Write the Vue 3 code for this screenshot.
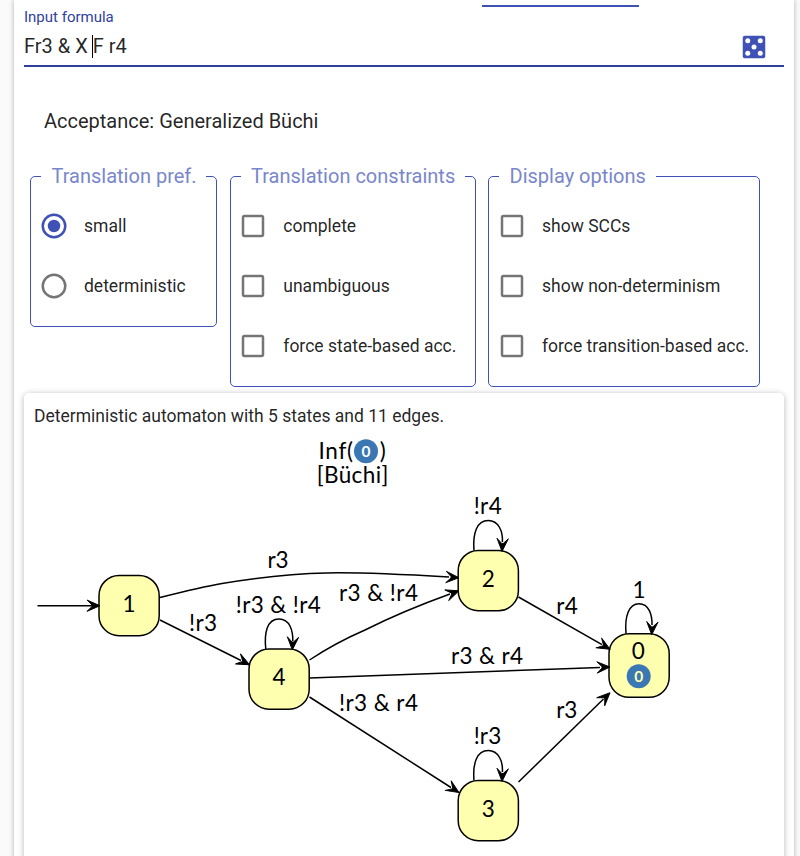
<script setup>
const groups = [
  { title: 'Translation pref.', cls: 'pref', kind: 'radio', items: ['small', 'deterministic'] },
  { title: 'Translation constraints', cls: 'constraints', kind: 'check', items: ['complete', 'unambiguous', 'force state-based acc.'] },
  { title: 'Display options', cls: 'display', kind: 'check', items: ['show SCCs', 'show non-determinism', 'force transition-based acc.'] }
]

const nodes = [
  { id: '1', x: 99, y: 575.5, h: 60.2, tx: 129, ty: 612 },
  { id: '4', x: 249, y: 649, h: 60.2, tx: 279, ty: 684.7 },
  { id: '2', x: 458.2, y: 550.5, h: 60.2, tx: 488.3, ty: 586.7 },
  { id: '3', x: 458.2, y: 780.5, h: 60.2, tx: 488.3, ty: 816.7 },
  { id: '0', x: 609, y: 633.7, h: 63.6, tx: 638.2, ty: 658.7 }
]

const edges = [
  'M37.5 605.7H92',
  'M160 597.5C180 592.5 202 587 222 583.5C303 570 345 571 449 577',
  'M160 620L241 660.5',
  'M309.5 660C320 653 342 640 365 630C393 616 425 603 450 594',
  'M309.5 678L600 667.4',
  'M309.5 697L451 787.5',
  'M518.5 597L602 644.7',
  'M518.5 782L603.5 699',
  'M265.8 649C264 633 267 619 279 619C290 619 293 631 292.8 641',
  'M474 550.5C472.5 533 477 520.5 488.2 520.5C499 520.5 503 532 502.4 542',
  'M474 780.5C472.5 763 477 750.5 488.2 750.5C499 750.5 503 762 502.4 772',
  'M626 633.7C624.5 616 629 603.7 639 603.7C649 603.7 652.3 615 652 625'
]

const heads = [
  [100, 605.7, 0], [459, 577.7, 3], [249.5, 664.7, 26.5], [459, 590.8, -20],
  [610, 667, -2], [459, 792.6, 32.6], [610, 649.3, 29.7], [610, 692.7, -44.3],
  [292.3, 650, 93], [502, 551.5, 93], [502, 781.5, 93], [651.7, 634.8, 93]
]

const labels = [
  ['r3', 267.5, 568, 21], ['!r3', 189, 630.8, 28], ['!r3 & !r4', 235.8, 612.7, 85],
  ['r3 & !r4', 339, 601.3, 79], ['!r3 & r4', 339, 710.7, 79], ['r3 & r4', 451, 664, 72],
  ['!r4', 473.7, 513.7, 28], ['r4', 556.3, 614.2, 21.5], ['r3', 556.3, 717.8, 21],
  ['!r3', 473.7, 743.9, 27.5], ['Inf(', 318.5, 459.2, 34.5], [')', 379.7, 459.2, 7],
  ['[Büchi]', 316.8, 483.2, 71.5]
]
</script>

<template>
  <main class="page">
    <div class="tabs"><span class="tab-line"></span></div>
    <section class="formula">
      <label class="caption">Input formula</label>
      <div class="field">
        <div class="value"><span>Fr3 &amp; X </span><i class="caret"></i><span>F r4</span></div>
        <svg class="dice" viewBox="0 0 24 24">
          <rect x="3" y="3" width="18" height="18" rx="1.6" fill="#3f51b5" />
          <g fill="#fff">
            <circle cx="7" cy="7" r="2" /><circle cx="17" cy="7" r="2" /><circle cx="12" cy="12" r="2" />
            <circle cx="7" cy="17" r="2" /><circle cx="17" cy="17" r="2" />
          </g>
        </svg>
      </div>
    </section>
    <p class="acceptance">Acceptance: Generalized Büchi</p>
    <section class="groups">
      <fieldset v-for="g in groups" :key="g.cls" :class="g.cls">
        <legend>{{ g.title }}</legend>
        <div v-for="(item, i) in g.items" :key="item" class="option">
          <svg class="control" viewBox="0 0 24 24">
            <template v-if="g.kind === 'radio'">
              <circle cx="12" cy="12" r="9" fill="none" stroke-width="2" :stroke="i === 0 ? '#3f51b5' : '#757575'" />
              <circle v-if="i === 0" cx="12" cy="12" r="5" fill="#3f51b5" />
            </template>
            <path v-else fill="#757575" d="M19 5v14H5V5h14m0-2H5c-1.1 0-2 .9-2 2v14c0 1.1.9 2 2 2h14c1.1 0 2-.9 2-2V5c0-1.1-.9-2-2-2z" />
          </svg>
          <span>{{ item }}</span>
        </div>
      </fieldset>
    </section>
    <section class="card">
      <p class="summary">Deterministic automaton with 5 states and 11 edges.</p>
      <svg class="graph" viewBox="24 430 760 440">
        <g fill="#ffffb0" stroke="#000" stroke-width="1.5">
          <rect v-for="n in nodes" :key="n.id" :x="n.x" :y="n.y" width="60.2" :height="n.h" rx="20" />
        </g>
        <g fill="none" stroke="#000" stroke-width="1.5">
          <path v-for="d in edges" :key="d" :d="d" />
        </g>
        <path v-for="(h, i) in heads" :key="i" d="M0 0L-13 5.7L-8 .7V-.7L-13-5.7Z" stroke="#000" stroke-width=".9" :transform="`translate(${h[0]} ${h[1]}) rotate(${h[2]})`" />
        <text v-for="(l, i) in labels" :key="i" :x="l[1]" :y="l[2]" :textLength="l[3]">{{ l[0] }}</text>
        <text v-for="n in nodes" :key="n.id" :x="n.tx" :y="n.ty" text-anchor="middle">{{ n.id }}</text>
        <text x="639" y="598" text-anchor="middle">1</text>
        <circle cx="366" cy="451.2" r="12" fill="#3a77b3" />
        <circle cx="638.7" cy="676.3" r="12" fill="#3a77b3" />
        <text class="mark" x="366" y="456.6" text-anchor="middle">0</text>
        <text class="mark pale" x="638.7" y="681.7" text-anchor="middle">0</text>
      </svg>
    </section>
  </main>
</template>

<style>
body { background: #fafafa; overflow: hidden; }
</style>

<style scoped>
* { box-sizing: border-box; }
.page {
  width: 780px; height: 876px; margin-left: 14px; padding: 0 10px;
  background: #fff; color: rgba(0, 0, 0, .87);
  font-family: Roboto, sans-serif;
  box-shadow: 0 0 5px rgba(0, 0, 0, .3);
}
.tabs { height: 7px; display: flex; align-items: flex-end; padding-left: 458px; }
.tab-line { width: 157px; height: 2px; background: #3f51b5; }
.formula { height: 60px; border-bottom: 2px solid #303f9f; }
.caption { display: block; height: 20px; line-height: 20px; font-size: 15px; color: #303f9f; }
.field { display: flex; justify-content: space-between; align-items: center; height: 38px; padding: 2px 15px 0 0; }
.value { display: flex; align-items: center; white-space: pre; font-size: 20px; line-height: 24px; margin-bottom: 2px; }
.caret { width: 1px; height: 23px; margin: 0 0 0 -1px; background: #000; }
.dice { width: 30px; height: 30px; }
.acceptance { margin: 42px 0 0 20px; height: 24px; line-height: 24px; font-size: 20px; }
.groups { display: flex; align-items: flex-start; height: 228px; margin-top: 32px; padding-left: 6px; }
fieldset { min-width: 0; margin: 0; padding: 8px 0 10px 8px; border: 1px solid #3f51b5; border-radius: 5px; }
legend { height: 23px; line-height: 23px; margin-left: 2px; padding: 0 9.5px 0 10.5px; font-size: 20px; color: #7986cb; }
.pref { width: 187px; margin-right: 13px; }
.constraints { width: 246px; margin-right: 12px; padding-left: 7px; }
.constraints legend { margin-left: 3px; padding: 0 10px; }
.constraints .option { gap: 15.3px; }
.display { width: 272px; }
.display legend { padding-right: 10px; }
.option { display: flex; align-items: center; gap: 15px; height: 60px; font-size: 17.5px; white-space: nowrap; }
.control { width: 30px; height: 30px; flex: none; }
.card { height: 477px; background: #fff; border-radius: 5px; box-shadow: 0 1px 6px rgba(0, 0, 0, .28); overflow: hidden; }
.summary { margin: 0; height: 37px; padding: 11px 10px 0; font-size: 17.5px; line-height: 24px; }
.graph { display: block; width: 760px; height: 440px; }
.graph text { font-family: Lato, sans-serif; font-size: 22.5px; fill: #000; }
.graph .mark { font-size: 15.5px; font-weight: 700; fill: #fff; }
.graph .pale { fill: #ffffb0; }
</style>
